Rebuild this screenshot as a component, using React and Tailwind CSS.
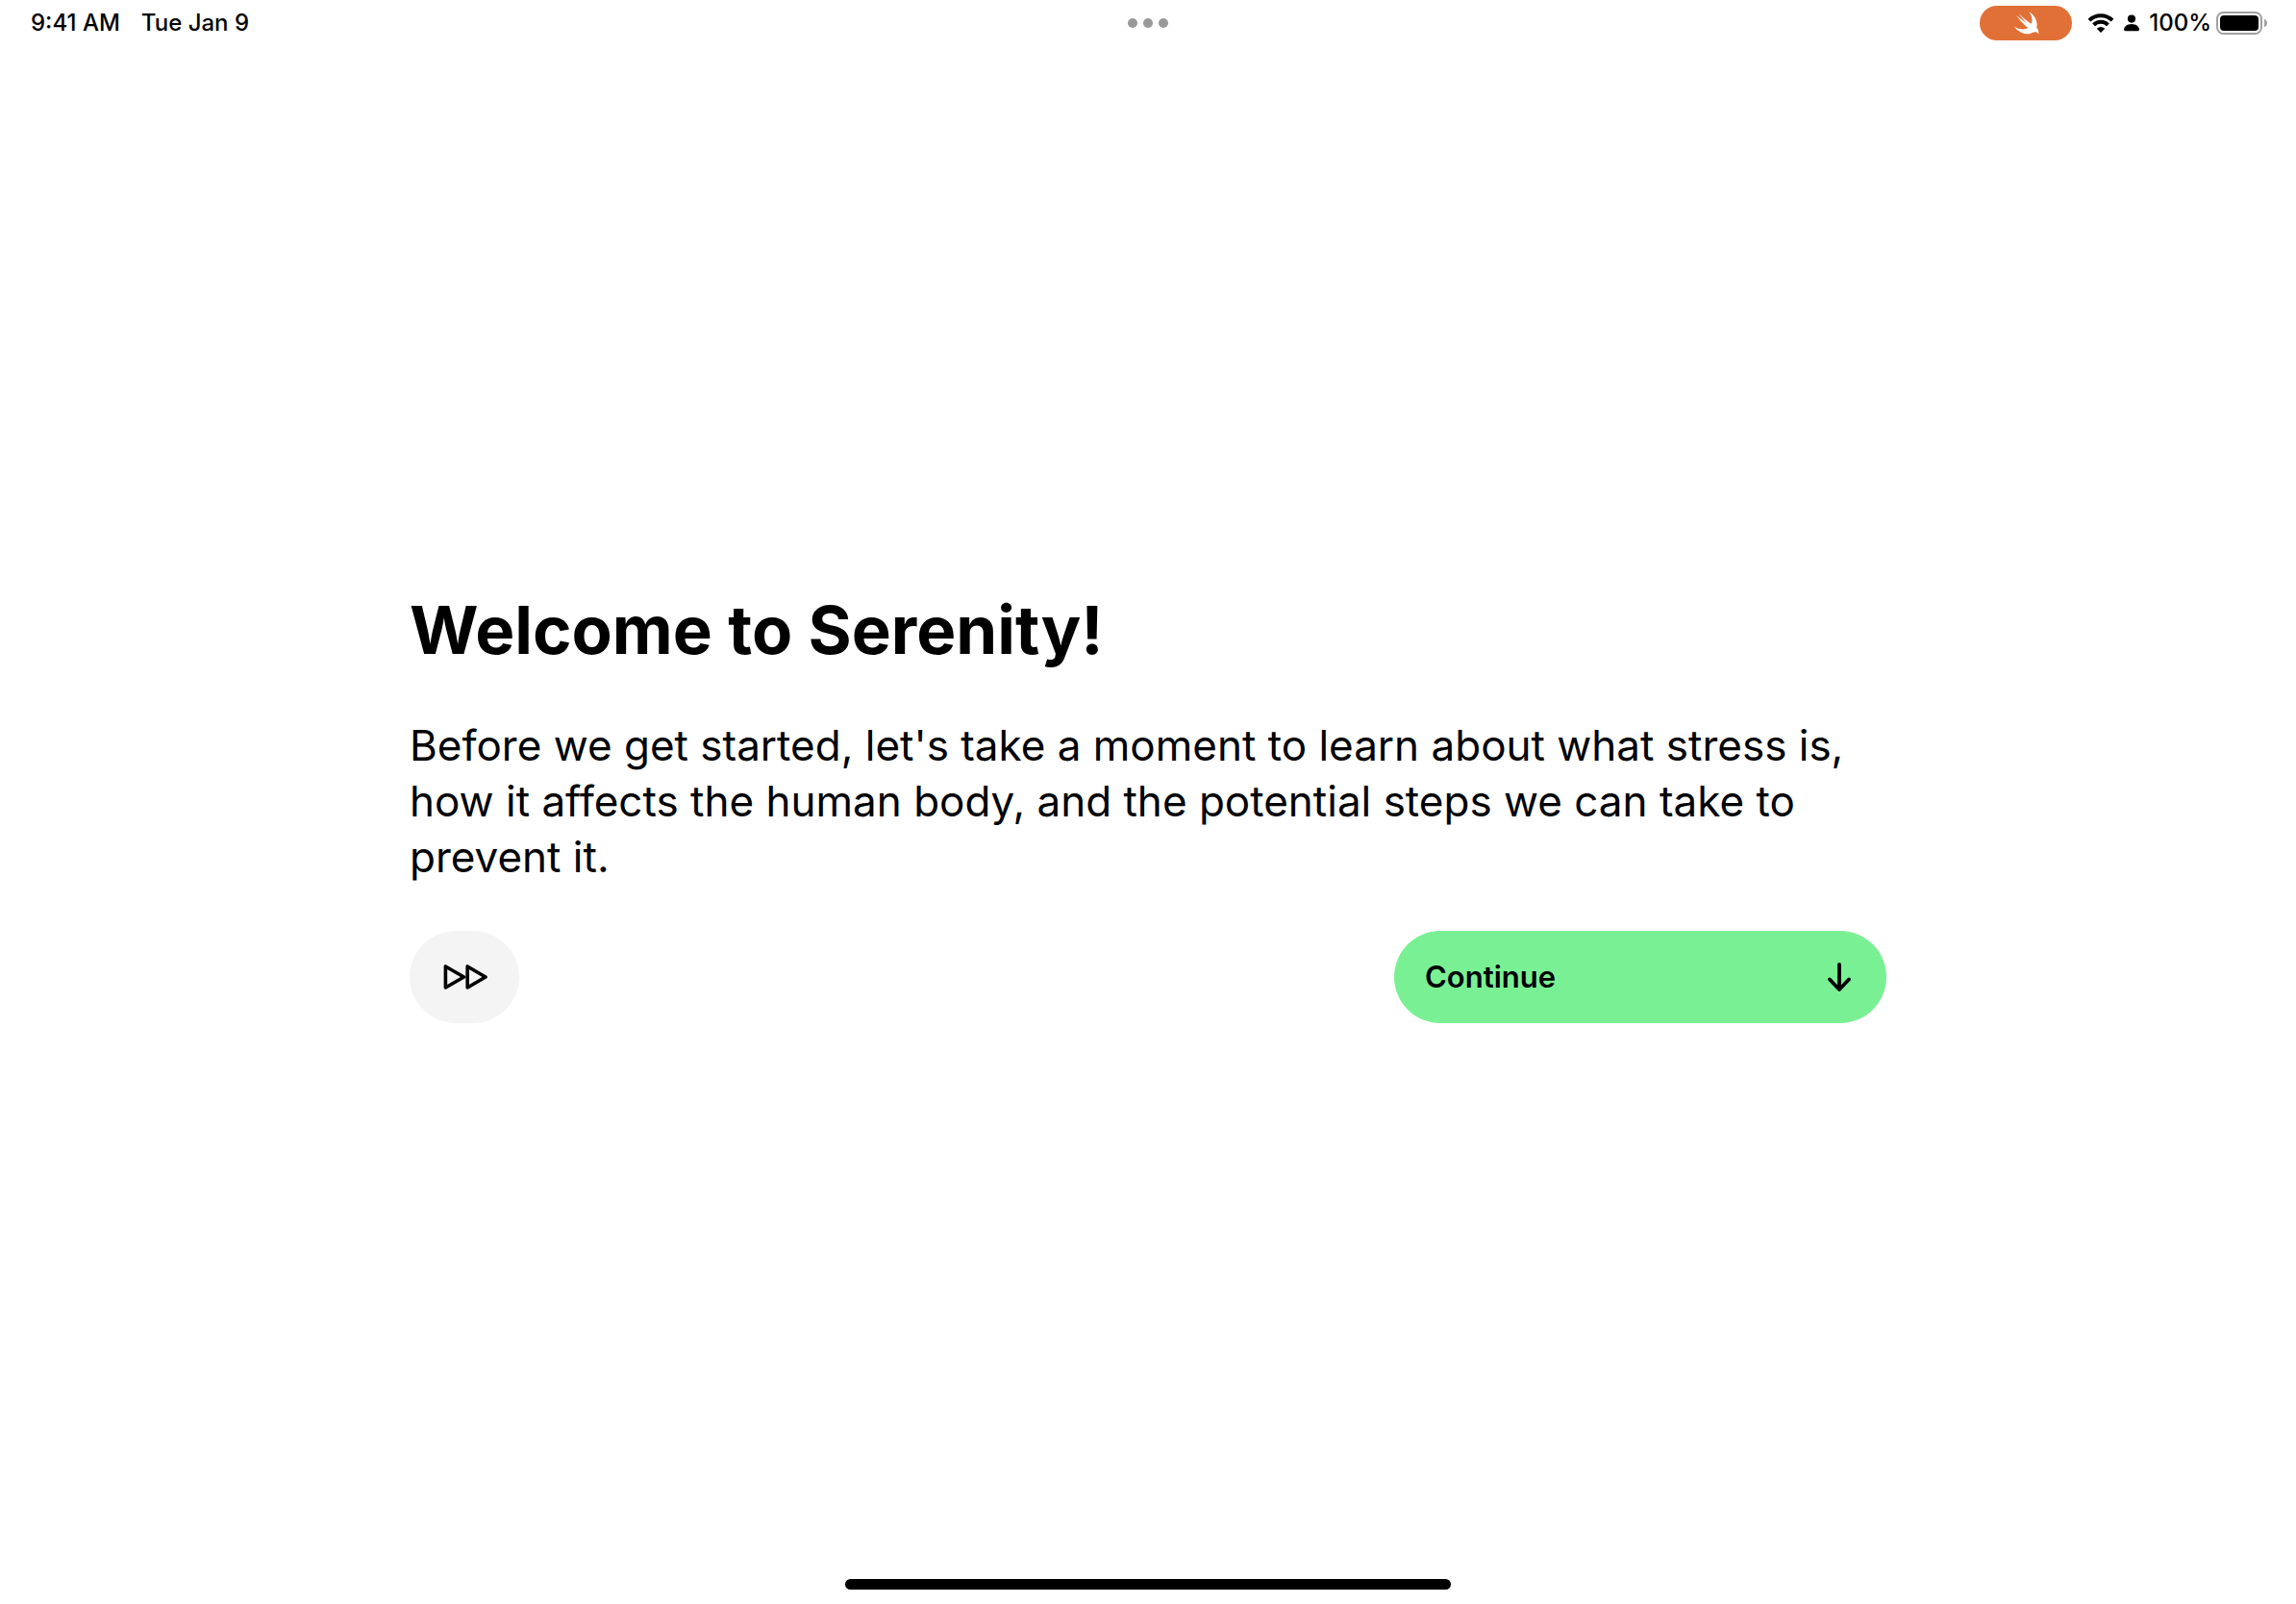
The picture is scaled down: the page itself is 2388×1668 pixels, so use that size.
import React from "react";

function SwiftBird() {
  return (
    <svg className="h-6 w-[27px]" viewBox="2 3.2 19 16.8" fill="currentColor" aria-hidden="true">
      <path d="M13.543 3.41c4.114 2.47 6.545 7.162 5.549 11.131-.024.093-.05.181-.076.272l.002.001c2.062 2.538 1.5 5.258 1.236 4.745-1.072-2.086-3.066-1.568-4.088-1.043a6.803 6.803 0 0 1-.281.158l-.02.012-.002.002c-2.115 1.123-4.957 1.205-7.812-.022a12.568 12.568 0 0 1-5.64-4.838c.649.48 1.35.902 2.097 1.252 3.019 1.414 6.051 1.311 8.197-.002C9.651 12.73 7.101 9.67 5.146 7.191a10.628 10.628 0 0 1-1.005-1.384c2.34 2.142 6.038 4.83 7.365 5.576C8.69 8.408 6.208 4.743 6.324 4.86c4.436 4.466 8.527 6.996 8.527 6.996.154.085.27.154.36.213.085-.215.16-.437.224-.668.708-2.588-.09-5.548-1.893-7.992z" />
    </svg>
  );
}

function WifiIcon() {
  return (
    <svg className="h-5 w-7" viewBox="0 0 28 20" fill="none" stroke="currentColor" strokeWidth="4" aria-hidden="true">
      <path d="M2 7.200a17 17 0 0 1 24 0" />
      <path d="M6.600 11.800a10.500 10.500 0 0 1 14.800 0" />
      <path d="M14 20l-4.200-4.200a6 6 0 0 1 8.400 0z" fill="currentColor" stroke="none" />
    </svg>
  );
}

function PersonIcon() {
  return (
    <svg className="h-[18px] w-4" viewBox="0 0 16 18" fill="currentColor" aria-hidden="true">
      <circle cx="8" cy="4.6" r="4.1" />
      <path d="M1.6 17.2C.6 17.2 0 16.7 0 15.800 0 13.100 3.100 10.100 8 10.100s8 3 8 5.700c0 .9-.6 1.400-1.600 1.400z" />
    </svg>
  );
}

function BatteryIcon() {
  return (
    <svg className="h-6 w-[53px]" viewBox="0 0 53 24" fill="none" role="img" aria-label="Battery full">
      <rect x="1" y="1" width="46" height="22" rx="6.500" stroke="#a1a1a1" strokeWidth="2" />
      <rect x="4" y="4" width="40" height="16" rx="4" fill="black" />
      <path d="M50 8c2 .6 3 2.100 3 4S52 15.400 50 16z" fill="#a1a1a1" />
    </svg>
  );
}

function FastForwardIcon() {
  return (
    <svg className="h-7 w-12" viewBox="-1 0 48 28" fill="none" stroke="currentColor" strokeWidth="3.600" strokeLinejoin="round" aria-hidden="true">
      <path d="M3.400 3v22L22.500 14z" />
      <path d="M26.200 3v22L45 14z" />
    </svg>
  );
}

function ArrowDownIcon() {
  return (
    <svg className="h-8 w-7" viewBox="0 0 28 32" fill="none" stroke="currentColor" strokeWidth="3.800" strokeLinecap="round" strokeLinejoin="round" aria-hidden="true">
      <path d="M14 2.800v26M4 18.500L14 29l10-10.500" />
    </svg>
  );
}

function StatusBar() {
  return (
    <header className="grid h-12 grid-cols-3 items-center px-[30px] text-2xl leading-6 font-medium">
      <div className="flex gap-[22px] pl-0.5">
        <span>9:41 AM</span>
        <span>Tue Jan 9</span>
      </div>
      <button type="button" aria-label="Window options" className="flex gap-1.5 justify-self-center">
        <span className="size-2.5 rounded-full bg-[#999999]" />
        <span className="size-2.5 rounded-full bg-[#999999]" />
        <span className="size-2.5 rounded-full bg-[#999999]" />
      </button>
      <div className="flex items-center justify-end">
        <span className="mr-4 flex h-9 w-24 items-center justify-center rounded-full bg-[#e17037] text-white">
          <SwiftBird />
        </span>
        <span className="mr-2.5"><WifiIcon /></span>
        <span className="mr-2.5"><PersonIcon /></span>
        <span className="mr-[5px]">100%</span>
        <BatteryIcon />
      </div>
    </header>
  );
}

export default function App() {
  return (
    <div className="flex min-h-screen flex-col bg-white font-['Inter',sans-serif] text-black">
      <StatusBar />
      <main className="mx-auto flex w-full max-w-[1536px] grow flex-col justify-center">
        <h1 className="text-[69px] leading-[86px] font-bold">Welcome to Serenity!</h1>
        <p className="mt-12 text-[44px] leading-[58px]">
          Before we get started, let's take a moment to learn about what stress is, how it affects the human body, and the potential steps we can take to prevent it.
        </p>
        <div className="mt-12 flex justify-between">
          <button type="button" aria-label="Skip" className="flex h-24 w-[114px] items-center justify-center rounded-full bg-[#f4f4f4]">
            <FastForwardIcon />
          </button>
          <button type="button" className="flex h-24 w-1/3 items-center justify-between rounded-full bg-[#7af094] pr-[35px] pl-8 text-[31px] leading-10 font-semibold">
            Continue
            <ArrowDownIcon />
          </button>
        </div>
      </main>
      <footer className="flex h-10 justify-center pt-3.5">
        <div className="h-[11px] w-[630px] rounded-full bg-black" />
      </footer>
    </div>
  );
}
